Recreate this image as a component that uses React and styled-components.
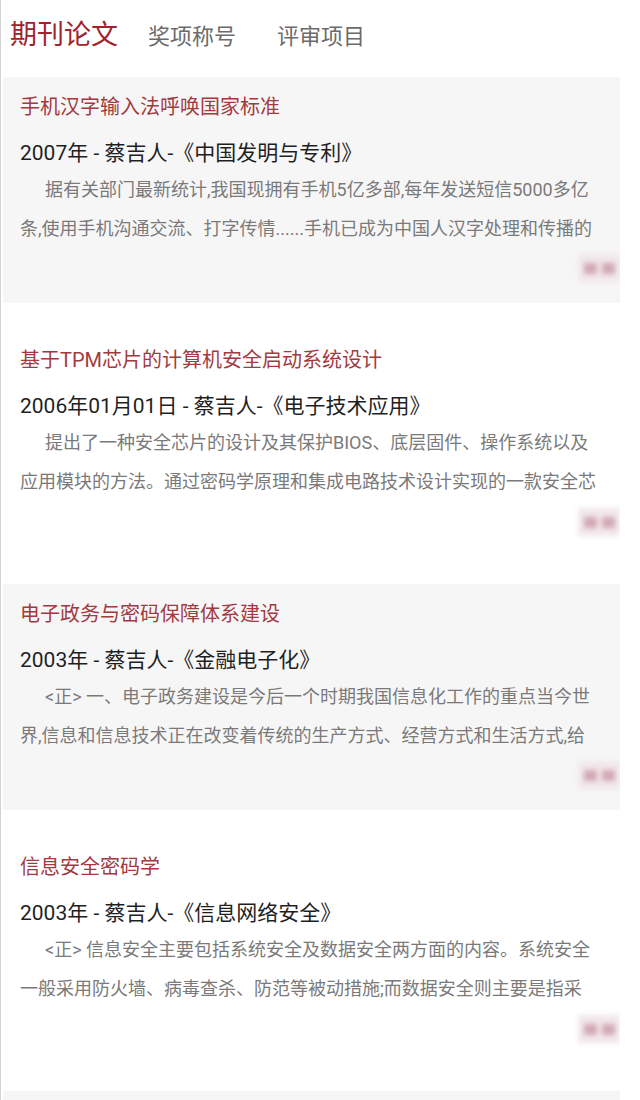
import React from "react";
import styled, { createGlobalStyle } from "styled-components";

const GlobalStyle = createGlobalStyle`
  html, body {
    margin: 0;
    padding: 0;
    background: #ffffff;
  }
  body {
    font-family: Roboto, "Noto Sans CJK SC", sans-serif;
  }
`;

const Page = styled.div`
  border-left: 1px solid #d4d4d4;
  height: 1100px;
  padding-left: 2px;
  width: 617px;
  overflow: hidden;
`;

const TabBar = styled.div`
  display: flex;
  align-items: center;
  height: 77px;
  padding-left: 7px;
  padding-bottom: 6px;
  box-sizing: border-box;
`;

const Tab = styled.div`
  font-size: ${(p) => (p.$active ? "27px" : "22px")};
  color: ${(p) => (p.$active ? "#a0232b" : "#6b6b6b")};
  margin-right: ${(p) => (p.$active ? "30px" : "41px")};
  line-height: 1;
  padding-top: ${(p) => (p.$active ? "0" : "3px")};
`;

const Card = styled.div`
  background: ${(p) => (p.$shaded ? "#f7f6f7" : "#ffffff")};
  padding: ${(p) => (p.$spacious ? "43px 14px 48px 17px" : "16px 14px 21px 17px")};
  height: ${(p) => (p.$spacious ? "281px" : "226px")};
  box-sizing: border-box;
  display: flex;
  flex-direction: column;
`;

const Title = styled.div`
  font-size: 20px;
  line-height: 28px;
  color: #a23a3f;
  white-space: nowrap;
`;

const Meta = styled.div`
  margin-top: 17px;
  font-size: 21px;
  line-height: 30px;
  color: #1f1f1f;
  white-space: nowrap;
`;

const Desc = styled.div`
  margin-top: 2px;
  font-size: 18px;
  line-height: 39px;
  height: 78px;
  color: #7a7a7a;
  text-indent: 25px;
  word-break: break-all;
`;

const Footer = styled.div`
  margin-top: auto;
  display: flex;
  justify-content: flex-end;
  margin-right: -14px;
`;

const Blurred = styled.div`
  width: 42px;
  height: 28px;
  background: #f1e7ea;
  display: flex;
  align-items: center;
  justify-content: center;
  gap: 5px;
  filter: blur(2.5px);
`;

const Blob = styled.div`
  width: 13px;
  height: 11px;
  background: #d2a9b4;
`;

const papers = [
  {
    title: "手机汉字输入法呼唤国家标准",
    meta: "2007年 - 蔡吉人-《中国发明与专利》",
    desc: "据有关部门最新统计,我国现拥有手机5亿多部,每年发送短信5000多亿条,使用手机沟通交流、打字传情......手机已成为中国人汉字处理和传播的",
  },
  {
    title: "基于TPM芯片的计算机安全启动系统设计",
    meta: "2006年01月01日 - 蔡吉人-《电子技术应用》",
    desc: "提出了一种安全芯片的设计及其保护BIOS、底层固件、操作系统以及应用模块的方法。通过密码学原理和集成电路技术设计实现的一款安全芯",
  },
  {
    title: "电子政务与密码保障体系建设",
    meta: "2003年 - 蔡吉人-《金融电子化》",
    desc: "<正> 一、电子政务建设是今后一个时期我国信息化工作的重点当今世界,信息和信息技术正在改变着传统的生产方式、经营方式和生活方式,给",
  },
  {
    title: "信息安全密码学",
    meta: "2003年 - 蔡吉人-《信息网络安全》",
    desc: "<正> 信息安全主要包括系统安全及数据安全两方面的内容。系统安全一般采用防火墙、病毒查杀、防范等被动措施;而数据安全则主要是指采",
  },
  { title: "", meta: "", desc: "" },
];

export default function App() {
  return (
    <>
      <GlobalStyle />
      <Page>
        <TabBar>
          <Tab $active>期刊论文</Tab>
          <Tab>奖项称号</Tab>
          <Tab>评审项目</Tab>
        </TabBar>
        {papers.map((p, i) =>
          p.title ? (
            <Card key={i} $shaded={i % 2 === 0} $spacious={i % 2 === 1}>
              <Title>{p.title}</Title>
              <Meta>{p.meta}</Meta>
              <Desc>{p.desc}</Desc>
              <Footer>
                <Blurred>
                  <Blob />
                  <Blob />
                </Blurred>
              </Footer>
            </Card>
          ) : (
            <Card key={i} $shaded />
          )
        )}
      </Page>
    </>
  );
}
